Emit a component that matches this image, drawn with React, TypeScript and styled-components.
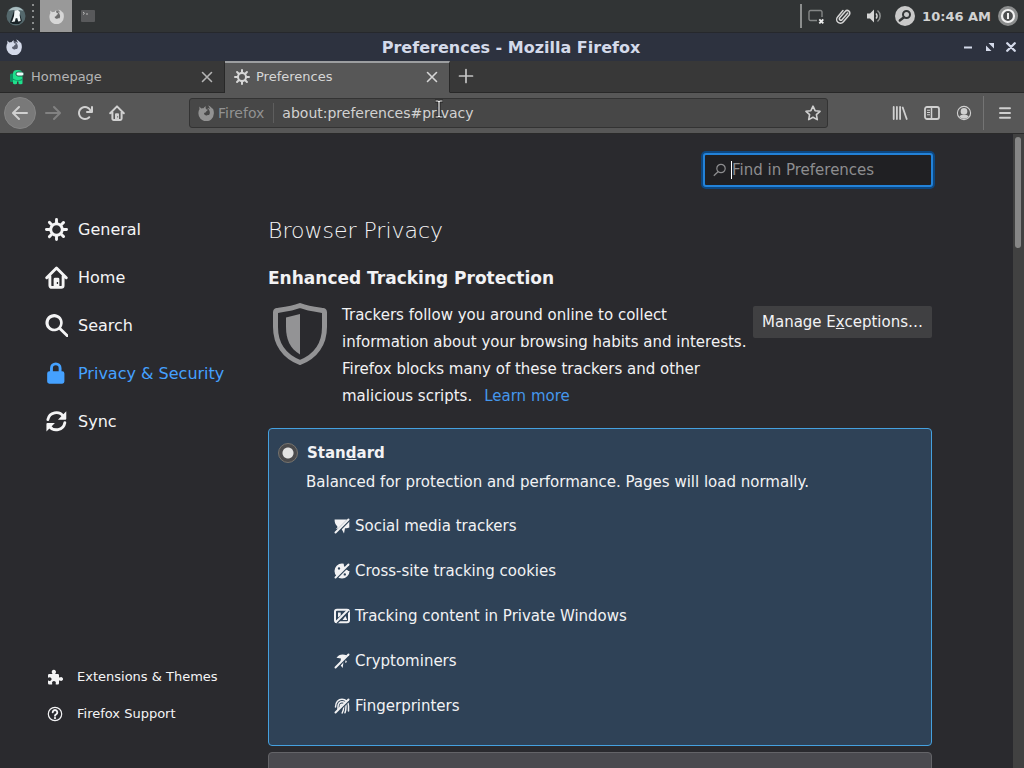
import React from "react";
import styled, { createGlobalStyle } from "styled-components";

const GlobalStyle = createGlobalStyle`
  *, *::before, *::after { box-sizing: border-box; }
  html, body { margin: 0; padding: 0; }
  body {
    background: #2a2a2e;
    color: #f2f2f4;
    font-family: "DejaVu Sans", sans-serif;
    font-size: 15px;
  }
  button, input { font: inherit; color: inherit; }
  h1, h2, p, ul { margin: 0; padding: 0; }
  ul { list-style: none; }
  svg { display: block; flex: none; }
`;

/* ---------- icons ---------- */

type IconProps = { size?: number };

const Svg = ({ size = 16, box = 16, children }: IconProps & { box?: number; children: React.ReactNode }) => (
  <svg width={size} height={size} viewBox={`0 0 ${box} ${box}`} fill="currentColor" aria-hidden="true">
    {children}
  </svg>
);

const GearIcon = (p: IconProps) => (
  <Svg {...p}>
    <path d="M15 7h-2.1a4.967 4.967 0 0 0-.732-1.753l1.49-1.49a1 1 0 0 0-1.414-1.414l-1.49 1.49A4.968 4.968 0 0 0 9 3.1V1a1 1 0 0 0-2 0v2.1a4.968 4.968 0 0 0-1.753.732l-1.49-1.49a1 1 0 0 0-1.414 1.415l1.49 1.49A4.967 4.967 0 0 0 3.1 7H1a1 1 0 0 0 0 2h2.1a4.968 4.968 0 0 0 .737 1.763l-1.495 1.48a1 1 0 1 0 1.414 1.414l1.48-1.495A4.968 4.968 0 0 0 7 12.9V15a1 1 0 0 0 2 0v-2.1a4.968 4.968 0 0 0 1.753-.732l1.49 1.49a1 1 0 0 0 1.414-1.414l-1.49-1.49A4.967 4.967 0 0 0 12.9 9H15a1 1 0 0 0 0-2zM5 8a3 3 0 1 1 3 3 3 3 0 0 1-3-3z" />
  </Svg>
);

const HomeIcon = (p: IconProps) => (
  <Svg {...p}>
    <path d="M1.200 8.2 8 1.4l6.800 6.800M3.4 7v6.6a1.3 1.3 0 0 0 1.3 1.3h6.600a1.3 1.3 0 0 0 1.3-1.3V7" fill="none" stroke="currentColor" strokeWidth="2" strokeLinecap="round" strokeLinejoin="round" />
    <path fillRule="evenodd" d="M6 15V9.2a1 1 0 0 1 1-1h2a1 1 0 0 1 1 1V15zM8.2 11.2v1.4h.9v-1.4z" />
  </Svg>
);

const SearchIcon = (p: IconProps) => (
  <Svg {...p}>
    <path d="M15.707 14.293l-5-5A6 6 0 1 0 9.3 10.7l5 5a1 1 0 0 0 1.414-1.414zM6 10a4 4 0 1 1 4-4 4 4 0 0 1-4 4z" transform="translate(.5 .2)" />
  </Svg>
);

const LockIcon = (p: IconProps) => (
  <Svg {...p}>
    <path fillRule="evenodd" d="M3.500 6.500V4.300a4 4 0 0 1 8 0v2.200h.5a1.500 1.500 0 0 1 1.500 1.500v5.600a1.500 1.500 0 0 1-1.500 1.500H3a1.500 1.500 0 0 1-1.500-1.500V8A1.500 1.500 0 0 1 3 6.500zM5.500 6.500h4V4.300a2 2 0 0 0-4 0z" />
  </Svg>
);

const SyncIcon = (p: IconProps) => (
  <Svg {...p}>
    <path d="M2 6.600a6 6 0 0 1 10.800-2.200M13.800 8.800A6 6 0 0 1 3 11.200" fill="none" stroke="currentColor" strokeWidth="2" strokeLinecap="round" />
    <path d="M14.800.9V6a.7.700 0 0 1-.7.700H9zM1 14.900V9.700a.7.700 0 0 1 .7-.7h5.200z" />
  </Svg>
);

const PuzzleIcon = (p: IconProps) => (
  <Svg {...p}>
    <path d="M1 6.200a1.200 1.200 0 0 1 1.200-1.200H5c.4 0 .5-.4.2-.8A2.100 2.100 0 0 1 6.800.8a2.100 2.100 0 0 1 1.700 3.400c-.3.4-.2.800.2.800h2.100A1.200 1.200 0 0 1 12 6.200v1.900c0 .5.400.6.800.3a2 2 0 1 1 0 3.200c-.4-.3-.8-.2-.8.300v2.300a1.200 1.200 0 0 1-1.200 1.200H9.100c-.5 0-.6-.4-.4-.8a1.900 1.900 0 1 0-3.500 0c.2.400.1.800-.4.800H2.200A1.200 1.200 0 0 1 1 14.200v-2.100c0-.5.4-.6.8-.4a1.800 1.800 0 1 0 0-3.100c-.4.200-.8.100-.8-.4z" />
  </Svg>
);

const HelpIcon = (p: IconProps) => (
  <Svg {...p}>
    <g fill="none" stroke="currentColor" strokeLinecap="round">
      <circle cx="8" cy="8" r="6.700" strokeWidth="1.200" />
      <path d="M5.700 6.300A2.300 2.300 0 1 1 9.200 8.300C8.300 8.800 8 9.100 8 9.800" strokeWidth="1.900" />
    </g>
    <circle cx="8" cy="12.100" r="1.100" />
  </Svg>
);

const BackIcon = (p: IconProps) => (
  <Svg {...p}>
    <path d="M15 7H3.414l4.293-4.293a1 1 0 0 0-1.414-1.414l-6 6a1 1 0 0 0 0 1.414l6 6a1 1 0 0 0 1.414-1.414L3.414 9H15a1 1 0 0 0 0-2z" />
  </Svg>
);

const ForwardIcon = (p: IconProps) => (
  <Svg {...p}>
    <path d="M1 7h11.586L8.293 2.707a1 1 0 0 1 1.414-1.414l6 6a1 1 0 0 1 0 1.414l-6 6a1 1 0 0 1-1.414-1.414L12.586 9H1a1 1 0 0 1 0-2z" />
  </Svg>
);

const ReloadIcon = (p: IconProps) => (
  <Svg {...p}>
    <path d="M15 1a1 1 0 0 0-1 1v2.418A6.995 6.995 0 1 0 8 15a6.954 6.954 0 0 0 4.950-2.050 1 1 0 0 0-1.414-1.414A5.019 5.019 0 1 1 12.549 6H10a1 1 0 0 0 0 2h5a1 1 0 0 0 1-1V2a1 1 0 0 0-1-1z" />
  </Svg>
);

const StarIcon = (p: IconProps) => (
  <Svg {...p}>
    <path d="M8 1.200 10.100 5.700 15 6.300 11.400 9.700 12.300 14.600 8 12.200 3.700 14.600 4.600 9.700 1 6.300 5.900 5.700z" fill="none" stroke="currentColor" strokeWidth="1.600" strokeLinejoin="round" />
  </Svg>
);

const LibraryIcon = (p: IconProps) => (
  <Svg {...p}>
    <path d="M1.700 2v12M4.900 2v12M8.100 2v12M10.700 2.500l4 11.500" fill="none" stroke="currentColor" strokeWidth="1.800" strokeLinecap="round" />
  </Svg>
);

const SidebarIcon = (p: IconProps) => (
  <Svg {...p}>
    <rect x="1" y="2" width="14" height="12" rx="2" fill="none" stroke="currentColor" strokeWidth="1.800" />
    <path d="M7.500 2v12" stroke="currentColor" strokeWidth="1.500" />
    <path d="M3 5.200h3M3 7.500h3M3 9.800h3" stroke="currentColor" strokeWidth="1.100" />
  </Svg>
);

const AccountIcon = (p: IconProps) => (
  <Svg {...p}>
    <circle cx="8" cy="8" r="6.600" fill="none" stroke="currentColor" strokeWidth="1.100" />
    <circle cx="8" cy="6.400" r="3.300" />
    <path d="M3.200 11.200c1.200-1 2.200-1.300 2.800-1.300h4c.6 0 1.600.3 2.800 1.300A5.700 5.700 0 0 1 8 13.800a5.700 5.700 0 0 1-4.800-2.600z" />
  </Svg>
);

const MenuIcon = (p: IconProps) => (
  <Svg {...p}>
    <path d="M3 3.200h10M3 8h10M3 12.800h10" stroke="currentColor" strokeWidth="1.900" strokeLinecap="round" />
  </Svg>
);

const CloseIcon = ({ size = 12, weight = 1.6 }: IconProps & { weight?: number }) => (
  <Svg size={size} box={12}>
    <path d="M1.500 1.500l9 9M10.500 1.500l-9 9" stroke="currentColor" strokeWidth={weight} strokeLinecap="round" />
  </Svg>
);

const PlusIcon = (p: IconProps) => (
  <Svg {...p}>
    <path d="M8 1.500v13M1.500 8h13" stroke="currentColor" strokeWidth="1.700" strokeLinecap="round" />
  </Svg>
);

/* Fox curled round a globe: bold crescent, ear at the left, tail tip at the upper right. */
const FirefoxIcon = ({ size = 16, globe = "none" }: IconProps & { globe?: string }) => (
  <Svg size={size}>
    <circle cx="8.500" cy="7.500" r="5.500" fill={globe} />
    <path d="M1.500 1.500c.7.900 1.300 1.500 1.900 1.900.8-.3 1.500-.3 2.200-.1C6.200 2.100 6.900 1.500 7.900 1.200c-.4.800-.4 1.600 0 2.600.5.700 1.400.8 1.900.9-.1.700-.7 1.100-1.500 1.500-.1.700-.3 1.100-.9 1.400-.9.200-1.500.5-1.300 1.200.4 1.400 1.900 1.900 3.200 1.400.7-.3 1.200-.3 1.700-.1.900-1.200 1.100-2.700.5-4.100C11.100 4.600 10.300 3.600 9.200 3c1.200.1 2 .4 2.700 1C11.700 2.600 11 1.400 10 .4c2.100.5 3.800 2 4.500 3.600.1-.3.100-.6 0-1 1.200 1.700 1.500 3.700 1.300 5.800A7.700 7.700 0 0 1 .4 8.300C.4 6.600.8 5.200 1.500 4.200c-.2-.9-.2-1.800 0-2.700z" />
  </Svg>
);

const CrewmateIcon = () => (
  <Svg size={16}>
    <path fill="#0c9463" d="M1 5.500C1 5 2 4.500 4 4.500V13H2.500C1.500 13 1 12.500 1 12z" />
    <path fill="#1fe08c" d="M4 4.500C4 2 5.500 1 8.500 1S13.500 2 13.500 4.500V14c0 .8-.4 1.200-1.200 1.200h-1.600c-.7 0-1.200-.4-1.200-1.200v-1.500H8V14c0 .8-.4 1.200-1.200 1.200H5.200C4.400 15.200 4 14.800 4 14z" />
    <path fill="#0c9463" d="M4 9.500c3 2.200 6.500 2 9.500 0v1.500c-3 1.200-6.500 1-9.500 0z" />
    <rect x="7" y="3" width="8" height="4" rx="2" fill="#e8fff8" stroke="#123b33" strokeWidth=".8" />
  </Svg>
);

const ShieldIcon = () => (
  <svg width="56" height="64" viewBox="0 0 56 64" fill="#939395" aria-hidden="true">
    <path fill="none" stroke="#939395" strokeWidth="5" strokeLinejoin="round" d="M28 3.500C20.500 6.500 12 7.500 5 8.500c-1 .2-1.500 1-1.500 2V25c0 17 9 29.500 24.500 35.500C43.500 54.500 52.500 42 52.500 25V10.500c0-1-.5-1.800-1.500-2C44 7.500 35.500 6.500 28 3.500z" />
    <path d="M28 12v40.500C18 46.500 14 37.500 14 25V15.500z" />
  </svg>
);

/* Tracker glyphs are crossed out: a gap in the card colour beside a diagonal bar. */
const CARD = "#2f4257";

const Slashed = ({ children }: { children: React.ReactNode }) => (
  <Svg>
    {children}
    <path d="M1.800 15.800 15.800 1.800" stroke={CARD} strokeWidth="2" />
    <path d="M1.500 14.500 14.500 1.500" stroke="currentColor" strokeWidth="2" strokeLinecap="round" />
  </Svg>
);

const SocialIcon = () => (
  <Slashed>
    <path d="M.6 1.500H13L4 10.500c-.8.300-1.400.5-2.200.4 1.500-.8 1.800-1.500 1.400-2.600C1.200 6.500.5 4 .6 1.500zM15.300 3v6.500c-1.400.8-2.800.9-4.300.7L10 15.500 7.600 11z" />
  </Slashed>
);
const CookieIcon = () => (
  <Slashed>
    <path fillRule="evenodd" d="M8 .5A7.500 7.500 0 1 0 15.500 8c-1 .3-1.800-.2-2-1-1.500 0-2.200-1-2-2.200C10.400 4 9.500 2.500 9.800.8A7 7 0 0 0 8 .5zM5 4.200a1.200 1.200 0 1 1 0 2.400 1.200 1.200 0 0 1 0-2.400zM10.800 10.200a1.200 1.200 0 1 1 0 2.400 1.200 1.200 0 0 1 0-2.400z" />
  </Slashed>
);
const ContentIcon = () => (
  <Svg>
    <rect x="1" y="1.800" width="14" height="12.400" rx="2" fill="none" stroke="currentColor" strokeWidth="2" />
    <path d="M4 4.500h2.700V7.500L4 9.500zM8.500 12l3-4 1.700 4z" />
    <path d="M2.800 15 15 2.800" stroke={CARD} strokeWidth="1.800" />
    <path d="M2 14 14 2" stroke="currentColor" strokeWidth="1.900" strokeLinecap="round" />
  </Svg>
);
const CryptoIcon = () => (
  <Slashed>
    <path d="M2.500 4.800C4.500 1.500 8.500.6 12.500 2.300L9 7 6.500 8.500 7 5.500zM9.500 8.500l-.8 6.500-2-2.500zM11.500 6.500l1.500 2.500-1.800 1z" />
  </Slashed>
);
const FingerprintIcon = () => (
  <Slashed>
    <path fill="none" stroke="currentColor" strokeWidth="1.500" strokeLinecap="round" d="M1.500 9C1.500 4 4.500 1.300 8 1.300s6.500 2.700 6.500 6.700v5M4 11.500V8.300C4 5.500 5.800 3.800 8 3.800s4 1.700 4 4.500c0 2.700-.2 4.500-1 6.500M6.300 11V8.300C6.300 7 7 6.300 8 6.300s1.700.7 1.700 2c0 2.500-.4 4.700-1.500 6.700" />
  </Slashed>
);

/* ---------- desktop panel ---------- */

const Screen = styled.div`
  display: flex;
  flex-direction: column;
  height: 100vh;
  overflow: hidden;
`;

const Panel = styled.header`
  display: flex;
  align-items: center;
  height: 32px;
  flex: none;
  padding: 0 6px;
  background: #313435;
`;

const PanelButton = styled.button<{ $active?: boolean; $width?: number }>`
  display: flex;
  align-items: center;
  justify-content: center;
  width: ${(p) => p.$width ?? 20}px;
  height: 32px;
  padding: 0;
  border: 0;
  color: #d6d6d6;
  background: ${(p) => (p.$active ? "#999999" : "transparent")};
`;

const Grip = styled.div`
  width: 14px;
  height: 28px;
  background: radial-gradient(circle, #8a8d8d 1px, transparent 1px) center top / 6px 6px repeat-y;
`;

const Tray = styled.div`
  display: flex;
  align-items: center;
  margin-left: auto;
  gap: 7px;
  padding-left: 4px;
  border-left: 2px solid #8c8e8e;
  height: 24px;
`;

const Clock = styled.time`
  font-size: 13px;
  font-weight: 700;
  color: #d2d2d2;
  white-space: nowrap;
`;

/* ---------- window ---------- */

const TitleBar = styled.div`
  display: grid;
  grid-template-columns: 1fr auto 1fr;
  align-items: center;
  height: 29px;
  flex: none;
  padding: 0 8px 0 6px;
  background: #2d323f;
  border-top: 1px solid #26282c;
  color: #d4daea;
`;

const WindowTitle = styled.div`
  font-size: 16px;
  font-weight: 700;
`;

const WindowControls = styled.div`
  display: flex;
  justify-content: flex-end;
  gap: 10px;
`;

const GlyphButton = styled.button`
  display: flex;
  align-items: center;
  justify-content: center;
  padding: 0;
  border: 0;
  background: none;
`;

const TabBar = styled.div`
  display: flex;
  height: 32px;
  flex: none;
  background: #383838;
`;

const Tab = styled.div<{ $active?: boolean }>`
  display: flex;
  align-items: center;
  gap: 6px;
  width: 225px;
  padding: 0 11px 2px 9px;
  font-size: 13px;
  color: ${(p) => (p.$active ? "#d6d6d6" : "#b4b4b4")};
  background: ${(p) => (p.$active ? "#575757" : "transparent")};
  border-top: 2px solid ${(p) => (p.$active ? "#9c9ea0" : "transparent")};
  border-bottom: 1px solid ${(p) => (p.$active ? "#575757" : "#282828")};
  border-right: 1px solid #282828;
`;

const TabLabel = styled.span`
  flex: 1;
`;

const NewTab = styled.div`
  display: flex;
  flex: 1;
  align-items: center;
  padding: 0 8px 2px;
  color: #c4c4c4;
  border-bottom: 1px solid #282828;
`;

const Toolbar = styled.div`
  display: flex;
  align-items: center;
  height: 41px;
  flex: none;
  padding: 0 11px 0 4px;
  background: #575757;
  border-bottom: 1px solid #2a2a2a;
  color: #d0d0d0;
`;

const NavButtons = styled.div`
  display: flex;
  align-items: center;
  gap: 16px;
`;

const BackButton = styled(GlyphButton)`
  width: 32px;
  height: 32px;
  margin-right: -7px;
  border-radius: 50%;
  background: #797979;
  border: 1px solid #858585;
`;

const DimButton = styled(GlyphButton)`
  color: #828282;
`;

const UrlBar = styled.div`
  display: flex;
  align-items: center;
  flex: 1;
  max-width: 639px;
  height: 30px;
  margin-left: 64px;
  padding: 0 6px 0 8px;
  background: #474747;
  border: 1px solid #333333;
  border-radius: 3px;
  font-size: 14px;
`;

const Identity = styled.div`
  display: flex;
  align-items: center;
  gap: 4px;
  height: 20px;
  padding-right: 9px;
  border-right: 1px solid #5e5e5e;
  color: #929292;
`;

const UrlInput = styled.input`
  flex: 1;
  min-width: 0;
  padding: 0 8px;
  border: 0;
  outline: 0;
  background: transparent;
  color: #d2d2d2;
`;

const ToolGroup = styled.div`
  display: flex;
  align-items: center;
  gap: 16px;
  margin-left: auto;
`;

const Divider = styled.div`
  width: 1px;
  height: 34px;
  background: #747474;
  margin: 0 -3px 0 -5px;
`;

const Pointer = styled.svg`
  position: absolute;
  left: 434px;
  top: 99px;
`;

/* ---------- preferences page ---------- */

const Page = styled.div`
  display: flex;
  flex: 1;
  min-height: 0;
  background: #2a2a2e;
`;

const Sidebar = styled.nav`
  display: flex;
  flex-direction: column;
  justify-content: space-between;
  flex: none;
  width: 268px;
  padding: 71px 0 36px 45px;
`;

const Category = styled.a<{ $active?: boolean }>`
  display: flex;
  align-items: center;
  gap: 10px;
  height: 48px;
  font-size: 16px;
  text-decoration: none;
  color: ${(p) => (p.$active ? "#45a1ff" : "#f4f4f5")};
`;

const SupportLink = styled.a`
  display: flex;
  align-items: center;
  gap: 14px;
  height: 37px;
  padding-left: 2px;
  font-size: 13px;
  text-decoration: none;
  color: #f4f4f5;
`;

const Main = styled.main`
  display: flex;
  flex-direction: column;
  flex: 1;
  min-width: 0;
  max-width: 664px;
  overflow: hidden;
  padding: 0 4px;
  margin: 0 -4px;
  box-sizing: content-box;
`;

const SearchRow = styled.div`
  display: flex;
  justify-content: flex-end;
  margin-right: -1px;
  padding: 19px 0 29px;
`;

const SearchBox = styled.label`
  display: flex;
  align-items: center;
  gap: 4px;
  width: 230px;
  height: 34px;
  padding: 0 8px;
  color: #8d8d8f;
  background: #202023;
  border: 2px solid #2382d8;
  border-radius: 3px;
  box-shadow: 0 0 0 2px #0d4780;
`;

const SearchInput = styled.input`
  flex: 1;
  min-width: 0;
  padding: 0;
  border: 0;
  border-left: 1px solid #ffffff;
  outline: 0;
  height: 18px;
  background: transparent;
  &::placeholder { color: #8d8d8f; opacity: 1; }
`;

const PageTitle = styled.h1`
  font-size: 22px;
  font-weight: 200;
  line-height: 30px;
  color: #f4f4f5;
`;

const SectionTitle = styled.h2`
  margin-top: 18px;
  font-size: 17px;
  font-weight: 700;
  line-height: 28px;
`;

const Intro = styled.div`
  display: flex;
  padding: 10px 0 18px 4px;
`;

const IntroText = styled.p`
  flex: 1;
  padding-left: 14px;
  line-height: 27px;
`;

const LearnMore = styled.a`
  margin-left: 12px;
  color: #4597ec;
  text-decoration: none;
`;

const ManageButton = styled.button`
  flex: none;
  width: 179px;
  height: 32px;
  margin-top: 4px;
  padding: 0;
  border: 0;
  border-radius: 2px;
  background: #404042;
  white-space: nowrap;
`;

const Card = styled.section<{ $selected?: boolean }>`
  flex: none;
  height: ${(p) => (p.$selected ? "318px" : "120px")};
  margin-bottom: 6px;
  padding: 9px;
  border: 1px solid ${(p) => (p.$selected ? "#45a1e0" : "#646468")};
  border-radius: 4px;
  background: ${(p) => (p.$selected ? CARD : "#4a4a4f")};
`;

const RadioLabel = styled.label`
  display: flex;
  align-items: center;
  gap: 9px;
  height: 30px;
  font-size: 15px;
  font-weight: 700;
`;

const Radio = styled.input`
  appearance: none;
  width: 20px;
  height: 20px;
  margin: 0;
  border: 1px solid #77736d;
  border-radius: 50%;
  background: radial-gradient(circle, #e2e2e2 5px, #4a4a4c 6px);
`;

const CardText = styled.p`
  padding-left: 28px;
  line-height: 28px;
`;

const TrackerList = styled.ul`
  padding: 7px 0 0 56px;
`;

const Tracker = styled.li`
  display: flex;
  align-items: center;
  gap: 5px;
  height: 45px;
`;

const Scrollbar = styled.div`
  width: 11px;
  margin-left: auto;
  padding: 3px 2px;
  background: #414141;
`;

const Thumb = styled.div`
  width: 6px;
  height: 111px;
  border-radius: 3px;
  background: #868686;
`;

const categories = [
  { label: "General", Icon: GearIcon },
  { label: "Home", Icon: HomeIcon },
  { label: "Search", Icon: SearchIcon },
  { label: "Privacy & Security", Icon: LockIcon, active: true },
  { label: "Sync", Icon: SyncIcon },
];

const trackers = [
  { label: "Social media trackers", Icon: SocialIcon },
  { label: "Cross-site tracking cookies", Icon: CookieIcon },
  { label: "Tracking content in Private Windows", Icon: ContentIcon },
  { label: "Cryptominers", Icon: CryptoIcon },
  { label: "Fingerprinters", Icon: FingerprintIcon },
];

export default function App() {
  return (
    <Screen>
      <GlobalStyle />
      <Panel>
        <PanelButton aria-label="Applications">
          <Svg size={20} box={20}>
            <circle cx="10" cy="10" r="9.500" fill="#54686c" />
            <path fill="#a9bdc0" d="M2.500 5A9 9 0 0 1 17.500 5C15 3.800 5 3.800 2.500 5z" />
            <path fill="#182226" d="M4 16.500 8 5h5l3 10-3 3H7z" />
            <path fill="#f2f7f7" d="M8.500 4.500 12 4l2 2-.3 3.500 1 5.500-2.500.5-1-3.500-1.700.5-.5 3-3.500.5 1-1.500L8 10z" />
          </Svg>
        </PanelButton>
        <Grip />
        <PanelButton $active $width={32} aria-label="Firefox">
          <FirefoxIcon size={15} globe="#6c6c6c" />
        </PanelButton>
        <PanelButton $width={32} aria-label="Terminal">
          <Svg size={14} box={14}>
            <rect y="1" width="14" height="12" rx="1" fill="#58595b" />
            <path d="M2 3l1.500 1.300L2 5.500M5 5h2" fill="none" stroke="#b9b9b9" />
          </Svg>
        </PanelButton>
        <Tray>
          <PanelButton aria-label="Network">
            <Svg>
              <path d="M9 12.500H2.500a1.500 1.500 0 0 1-1.500-1.500V4a1.500 1.500 0 0 1 1.500-1.500h10A1.500 1.500 0 0 1 14 4v5" fill="none" stroke="#848686" strokeWidth="1.400" />
              <path d="M11.300 11.300l4 4M15.300 11.300l-4 4" stroke="#ededed" strokeWidth="1.900" />
            </Svg>
          </PanelButton>
          <PanelButton aria-label="Clipboard">
            <Svg size={18} box={18}>
              <path d="M13.800 6 8 12.700a1.500 1.500 0 0 1-2.300-2l5.500-6.300a2.600 2.600 0 0 1 4 3.500l-6 7a3.700 3.700 0 0 1-5.600-4.900L9 3.500" fill="none" stroke="#d6d6d6" strokeWidth="1.500" strokeLinecap="round" />
            </Svg>
          </PanelButton>
          <PanelButton $width={28} aria-label="Volume">
            <Svg>
              <path d="M1 5.500h3L8 1.500v13l-4-4H1z" />
              <path d="M10 5.500a3.500 3.500 0 0 1 0 5" fill="none" stroke="#d6d6d6" strokeWidth="1.500" />
              <path d="M11.500 2.500a7 7 0 0 1 0 11" fill="none" stroke="#909292" strokeWidth="1.500" />
            </Svg>
          </PanelButton>
          <PanelButton aria-label="Find applications">
            <Svg size={20} box={20}>
              <circle cx="10" cy="10" r="10" fill="#c9c9c9" />
              <circle cx="11.500" cy="8.500" r="3.500" fill="none" stroke="#343636" strokeWidth="2" />
              <path d="M9 11.200 4.800 14.500" stroke="#343636" strokeWidth="2.400" strokeLinecap="round" />
            </Svg>
          </PanelButton>
          <Clock>10:46 AM</Clock>
          <PanelButton aria-label="Session">
            <Svg size={20} box={20}>
              <circle cx="10" cy="10" r="10" fill="#8c8e8e" />
              <circle cx="10" cy="10" r="6" fill="#4e5051" stroke="#f2f2f2" strokeWidth="2.200" />
              <path d="M10 7v6" stroke="#f2f2f2" strokeWidth="2" />
            </Svg>
          </PanelButton>
        </Tray>
      </Panel>

      <TitleBar>
        <FirefoxIcon globe="#5b6070" />
        <WindowTitle>Preferences - Mozilla Firefox</WindowTitle>
        <WindowControls>
          <GlyphButton aria-label="Minimize">
            <Svg size={12} box={12}><path d="M2 5.500h8v2H2z" /></Svg>
          </GlyphButton>
          <GlyphButton aria-label="Maximize">
            <Svg size={12} box={12}><path d="M4.500 2H10v5.500zM2 4.500V10h5.500z" /></Svg>
          </GlyphButton>
          <GlyphButton aria-label="Close window"><CloseIcon size={10} weight={2.8} /></GlyphButton>
        </WindowControls>
      </TitleBar>

      <TabBar>
        <Tab>
          <CrewmateIcon />
          <TabLabel>Homepage</TabLabel>
          <GlyphButton aria-label="Close Homepage"><CloseIcon /></GlyphButton>
        </Tab>
        <Tab $active>
          <GearIcon />
          <TabLabel>Preferences</TabLabel>
          <GlyphButton aria-label="Close Preferences"><CloseIcon /></GlyphButton>
        </Tab>
        <NewTab>
          <GlyphButton aria-label="New tab"><PlusIcon /></GlyphButton>
        </NewTab>
      </TabBar>

      <Toolbar>
        <NavButtons>
          <BackButton aria-label="Back"><BackIcon /></BackButton>
          <DimButton aria-label="Forward"><ForwardIcon /></DimButton>
          <GlyphButton aria-label="Reload"><ReloadIcon /></GlyphButton>
          <GlyphButton aria-label="Home"><HomeIcon /></GlyphButton>
        </NavButtons>
        <UrlBar>
          <Identity>
            <FirefoxIcon />
            <span>Firefox</span>
          </Identity>
          <UrlInput aria-label="Address" defaultValue="about:preferences#privacy" />
          <GlyphButton aria-label="Bookmark this page"><StarIcon /></GlyphButton>
        </UrlBar>
        <ToolGroup>
          <GlyphButton aria-label="Library"><LibraryIcon /></GlyphButton>
          <GlyphButton aria-label="Sidebars"><SidebarIcon /></GlyphButton>
          <GlyphButton aria-label="Account"><AccountIcon /></GlyphButton>
          <Divider />
          <GlyphButton aria-label="Open menu"><MenuIcon /></GlyphButton>
        </ToolGroup>
      </Toolbar>

      <Page>
        <Sidebar>
          <div>
            {categories.map(({ label, Icon, active }) => (
              <Category key={label} href="#" $active={active}>
                <Icon size={23} />
                <span>{label}</span>
              </Category>
            ))}
          </div>
          <div>
            <SupportLink href="#"><PuzzleIcon /><span>Extensions &amp; Themes</span></SupportLink>
            <SupportLink href="#"><HelpIcon /><span>Firefox Support</span></SupportLink>
          </div>
        </Sidebar>

        <Main>
          <SearchRow>
            <SearchBox>
              <Svg size={14} box={14}>
                <circle cx="8" cy="5.500" r="4.200" fill="none" stroke="currentColor" strokeWidth="1.200" />
                <path d="M5 8.700 .8 12.700" stroke="currentColor" strokeWidth="1.300" />
              </Svg>
              <SearchInput placeholder="Find in Preferences" aria-label="Find in Preferences" />
            </SearchBox>
          </SearchRow>
          <PageTitle>Browser Privacy</PageTitle>
          <SectionTitle>Enhanced Tracking Protection</SectionTitle>
          <Intro>
            <ShieldIcon />
            <IntroText>
              Trackers follow you around online to collect information about your browsing habits and interests. Firefox
              blocks many of these trackers and other malicious scripts.
              <LearnMore href="#">Learn more</LearnMore>
            </IntroText>
            <ManageButton>Manage E<u>x</u>ceptions…</ManageButton>
          </Intro>
          <Card $selected>
            <RadioLabel>
              <Radio type="radio" name="protection" defaultChecked />
              <span>Stan<u>d</u>ard</span>
            </RadioLabel>
            <CardText>Balanced for protection and performance. Pages will load normally.</CardText>
            <TrackerList>
              {trackers.map(({ label, Icon }) => (
                <Tracker key={label}><Icon />{label}</Tracker>
              ))}
            </TrackerList>
          </Card>
          <Card />
        </Main>
        <Scrollbar><Thumb /></Scrollbar>
      </Page>

      <Pointer width="10" height="20" viewBox="0 0 10 20" aria-hidden="true">
        <path d="M1 2h3l1 1 1-1h3M5 3v14M1 18h3l1-1 1 1h3" fill="none" stroke="#202020" strokeWidth="3" />
        <path d="M1.500 2h2.500l1 1 1-1h2.500M5 3v14M1.500 18h2.500l1-1 1 1h2.500" fill="none" stroke="#f4f4f4" strokeWidth="1.200" />
      </Pointer>
    </Screen>
  );
}
